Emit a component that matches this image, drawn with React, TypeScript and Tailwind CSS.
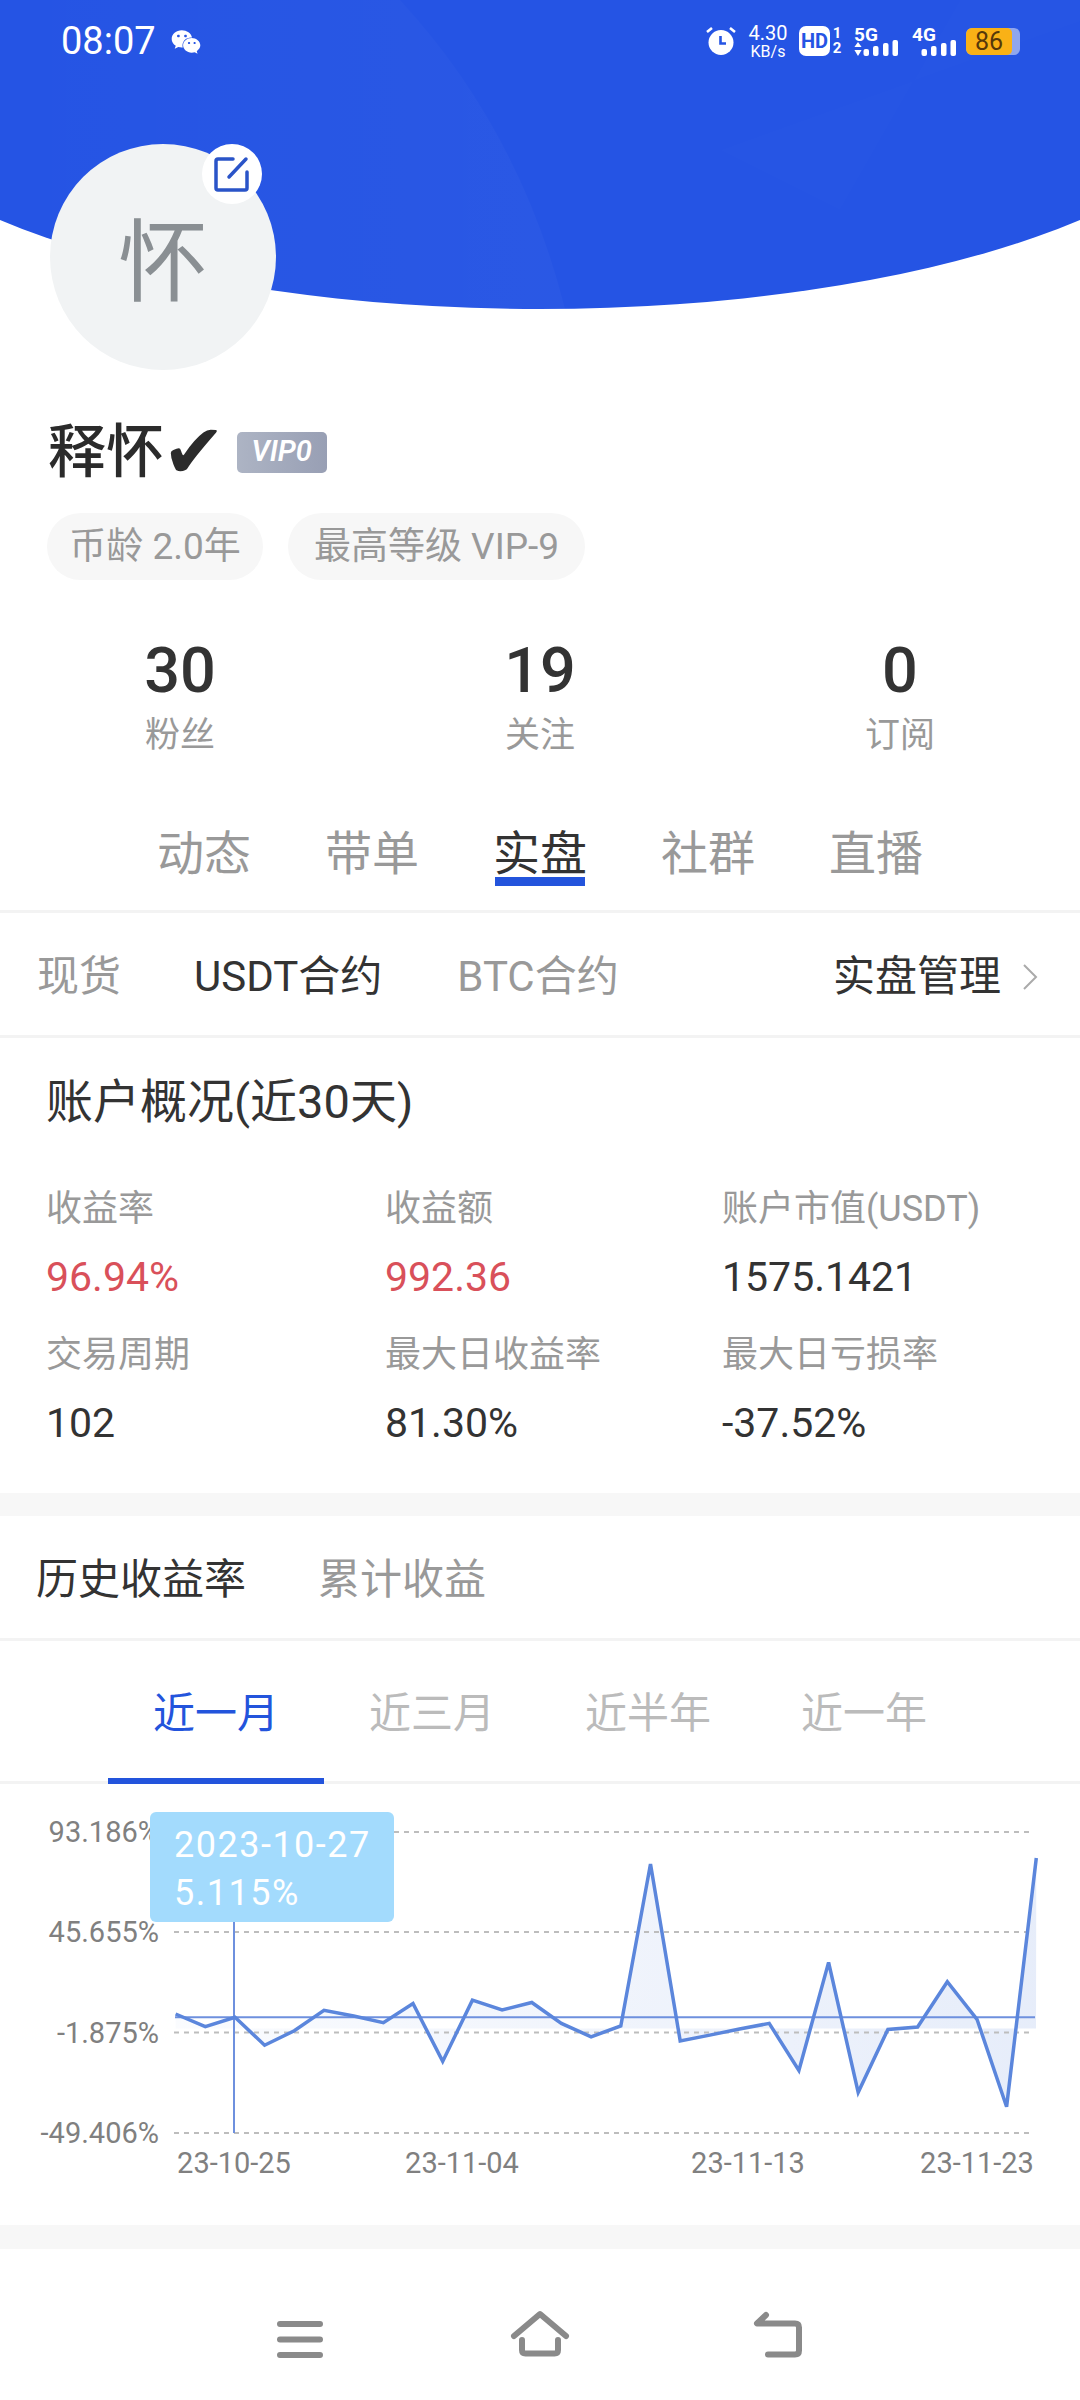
import { FaWeixin } from 'react-icons/fa';

const ys = [230, 242.7, 233.3, 261.2, 246.8, 226.3, 232, 238.7, 219.5, 277.4, 216.2, 226, 218.5, 239.4, 252.8, 242, 80, 256.9, 251.1, 245, 239.4, 286.4, 178.4, 308.3, 245.4, 243, 197.7, 235.3, 322.7, 74];
const points = ys.map((y, i) => `${(175.6 + i * 29.68).toFixed(1)},${y}`).join(' ');
const grid = [
  { y: 48, label: '93.186%' },
  { y: 148, label: '45.655%' },
  { y: 248.5, label: '-1.875%' },
  { y: 349, label: '-49.406%' },
];
const dates = [
  { x: 234, label: '23-10-25' },
  { x: 462, label: '23-11-04' },
  { x: 748, label: '23-11-13' },
  { x: 977, label: '23-11-23' },
];
const overview = [
  { label: '收益率', value: '96.94%', red: true },
  { label: '收益额', value: '992.36', red: true },
  { label: '账户市值(USDT)', value: '1575.1421' },
  { label: '交易周期', value: '102' },
  { label: '最大日收益率', value: '81.30%' },
  { label: '最大日亏损率', value: '-37.52%' },
];

function Signal({ name, arrows }: { name: string; arrows?: boolean }) {
  return (
    <svg className="-mt-[6px]" width="44" height="36" viewBox="0 -6 44 36" fill="#fff">
      <text x="0" y="14.5" fontSize="19" fontWeight="700" fontFamily="Roboto, sans-serif">{name}</text>
      {arrows && <path d="M4 16l3.600 5H.4zM.4 24h7.200L4 30z" />}
      <rect x="9.500" y="23" width="5.500" height="7" rx="2" />
      <rect x="19" y="20" width="5.500" height="10" rx="2" />
      <rect x="29" y="17" width="5.500" height="13" rx="2" />
      <rect x="38.500" y="14" width="5.500" height="16" rx="2" />
    </svg>
  );
}

function StatusBar() {
  return (
    <div className="flex h-[82px] items-center text-white">
      <span className="ml-[61px] text-[38px] leading-none">08:07</span>
      <FaWeixin className="ml-[15px] mt-[2px] h-[30px] w-[30px]" />
      <div className="ml-auto mr-[60px] flex items-center">
        <svg width="30" height="30" viewBox="0 0 30 30">
          <circle cx="15" cy="16.500" r="12.500" fill="#fff" />
          <path d="M14.500 10v7.500H20" fill="none" stroke="#2554e4" strokeWidth="2.600" />
          <path d="M1 6l5-4M29 6l-5-4" stroke="#fff" strokeWidth="2.600" />
        </svg>
        <div className="ml-[12px] flex w-[40px] flex-col items-center leading-none">
          <span className="text-[20px]">4.30</span>
          <span className="mt-[1px] text-[16px]">KB/s</span>
        </div>
        <div className="ml-[11px] flex h-[30px] w-[31px] items-center justify-center rounded-[7px] bg-white text-[20px] font-bold text-[#2554e4]">HD</div>
        <div className="ml-[2px] flex w-[10px] flex-col items-center text-[15px] font-bold leading-[15px]">
          <span>1</span>
          <span>2</span>
        </div>
        <div className="ml-[12px] flex">
          <Signal name="5G" arrows />
        </div>
        <div className="ml-[14px] flex">
          <Signal name="4G" />
        </div>
        <div className="ml-[10px] flex h-[27px] w-[54px] overflow-hidden rounded-[6px] bg-[#8fa6ee]">
          <div className="flex h-full w-[46px] items-center justify-center rounded-[5px] bg-[#f9b116] text-[25px] leading-none text-[#55380a]">86</div>
        </div>
      </div>
    </div>
  );
}

function Chart() {
  return (
    <div className="relative h-[441px]">
      <svg width="1080" height="441" viewBox="0 0 1080 441">
        <defs>
          <linearGradient id="area" x1="0" y1="0" x2="1" y2="0">
            <stop offset="0" stopColor="#5b86dc" stopOpacity="0.03" />
            <stop offset="1" stopColor="#5b86dc" stopOpacity="0.15" />
          </linearGradient>
        </defs>
        <polygon points={`175.6,244.5 ${points} 1036,244.5`} fill="url(#area)" />
        {grid.map((g) => (
          <line key={g.y} x1="174" x2="1031" y1={g.y} y2={g.y} stroke="#bdbdbd" strokeWidth="2" strokeDasharray="5 5" />
        ))}
        <line x1="175" x2="1035" y1="233.3" y2="233.3" stroke="#6e90de" strokeWidth="2" />
        <line x1="234" x2="234" y1="130" y2="349" stroke="#6e90de" strokeWidth="2" />
        <polyline points={points} fill="none" stroke="#5b86dc" strokeWidth="3.500" />
        <g fontFamily="Roboto, sans-serif" fontSize="29" fill="#808080">
          {grid.map((g) => (
            <text key={g.label} x="159" y={g.y + 10} textAnchor="end">{g.label}</text>
          ))}
          {dates.map((d) => (
            <text key={d.label} x={d.x} y="389" textAnchor="middle">{d.label}</text>
          ))}
        </g>
      </svg>
      <div className="absolute left-[150px] top-[28px] flex h-[110px] w-[244px] flex-col justify-center gap-[12px] rounded-[6px] bg-[#a3dbfd] pl-[24px] pt-[3px] text-[36px] leading-[36px] tracking-[1.5px] text-white">
        <span>2023-10-27</span>
        <span>5.115%</span>
      </div>
    </div>
  );
}

function NavBar() {
  return (
    <div className="mx-[180px] grid grid-cols-3 justify-items-center pt-[61px] text-[#8a8a8a]">
      <svg width="60" height="60" viewBox="0 0 60 60" fill="none" stroke="currentColor" strokeWidth="6" strokeLinecap="round">
        <path d="M10 14h40M10 29.500h40M10 45h40" />
      </svg>
      <svg width="60" height="60" viewBox="0 0 60 60" fill="none" stroke="currentColor" strokeWidth="6" strokeLinecap="round" strokeLinejoin="round">
        <path d="M4 26L30 4l26 22" />
        <path d="M12 30v10q0 3.500 3.500 3.500h29q3.500 0 3.500-3.500V30" />
      </svg>
      <svg width="60" height="60" viewBox="0 0 60 60" fill="none" stroke="currentColor" strokeWidth="6" strokeLinecap="round" strokeLinejoin="round">
        <path d="M16 5l-9 8.500h38q4 0 4 4v23q0 4-4 4H18" />
      </svg>
    </div>
  );
}

export default function App() {
  return (
    <div className="relative h-[2400px] w-[1080px] overflow-hidden bg-white text-[#333] [font-family:Roboto,'Noto_Sans_CJK_SC',sans-serif]">
      {/* blue header, the wide ellipse gives the shallow curve */}
      <div className="absolute -left-[160px] top-0 h-[309px] w-[1400px] overflow-hidden rounded-bl-[700px_245px] rounded-br-[700px_245px] bg-[#2554e4]">
        <svg width="1400" height="309" viewBox="0 0 1400 309">
          <defs>
            <linearGradient id="shine" x1="0" y1="0" x2="1" y2="0">
              <stop offset="0" stopColor="#fff" stopOpacity="0" />
              <stop offset="1" stopColor="#fff" stopOpacity="0.025" />
            </linearGradient>
          </defs>
          <path d="M160 0H560Q680 130 725 309H160z" fill="url(#shine)" />
          <path d="M880 150L1000 210L1120 0H1300z" fill="#fff" fillOpacity="0.008" />
        </svg>
      </div>

      <div className="relative flex flex-col">
        <StatusBar />

        <div className="relative ml-[50px] mt-[62px] flex h-[226px] w-[226px] items-center justify-center rounded-full bg-[#f1f3f4] pt-[14px] text-[90px] leading-none text-[#8a8f93]">
          怀
          <div className="absolute right-[14px] top-[0px] flex h-[60px] w-[60px] items-center justify-center rounded-full bg-white">
            <svg width="38" height="38" viewBox="0 0 38 38" fill="none" stroke="#2a54c8" strokeWidth="3.500" strokeLinecap="round" strokeLinejoin="round">
              <path d="M20 4H5q-2 0-2 2v27q0 2 2 2h27q2 0 2-2V17" />
              <path d="M16 22L33 4" />
            </svg>
          </div>
        </div>

        <div className="ml-[48px] mt-[42px] flex h-[80px] items-center">
          <span className="text-[58px] font-medium leading-none text-[#2b2b2b]">释怀</span>
          <span className="-ml-[2px] text-[76px] leading-none text-[#2b2b2b] [font-family:'DejaVu_Sans',sans-serif]">✔</span>
          <span className="ml-[11px] flex h-[41px] w-[90px] items-center justify-center rounded-[5px] bg-gradient-to-r from-[#adb4c4] to-[#989fb4] text-[29px] font-semibold italic text-white">VIP0</span>
        </div>

        <div className="ml-[47px] mt-[21px] flex h-[67px] gap-[25px] text-[37px] text-[#999]">
          <span className="flex w-[216px] items-center justify-center rounded-full bg-[#f7f7f7]">币龄 2.0年</span>
          <span className="flex w-[297px] items-center justify-center rounded-full bg-[#f7f7f7]">最高等级 VIP-9</span>
        </div>

        <div className="mt-[50px] grid grid-cols-3 text-center">
          {[['30', '粉丝'], ['19', '关注'], ['0', '订阅']].map(([n, l]) => (
            <div key={l} className="flex flex-col items-center">
              <span className="mt-[1px] flex h-[78px] items-center text-[63px] font-medium leading-none">{n}</span>
              <span className="-mt-[1px] flex h-[54px] items-center text-[35px] leading-none text-[#999]">{l}</span>
            </div>
          ))}
        </div>

        <div className="mt-[61px] grid grid-cols-5 border-b-[3px] border-[#f3f3f3] px-[120px] pb-[27px]">
          {['动态', '带单', '实盘', '社群', '直播'].map((t) => (
            <div key={t} className={`relative flex h-[60px] items-center justify-center text-[47px] leading-none ${t === '实盘' ? 'text-[#333]' : 'text-[#999]'}`}>
              {t}
              {t === '实盘' && <div className="absolute left-[39px] top-[54px] h-[9px] w-[90px] bg-[#2354dc]" />}
            </div>
          ))}
        </div>

        <div className="flex h-[125px] items-center border-b-[3px] border-[#f3f3f3] pt-[5px] text-[42px] leading-none">
          <span className="ml-[37px] text-[#999]">现货</span>
          <span className="ml-[73px] text-[#333]">USDT合约</span>
          <span className="ml-[75px] text-[#999]">BTC合约</span>
          <span className="ml-auto text-[#333]">实盘管理</span>
          <svg className="ml-[21px] mr-[42px]" width="16" height="28" viewBox="0 0 16 28" fill="none" stroke="#aaa" strokeWidth="2">
            <path d="M2 2l12 12L2 26" />
          </svg>
        </div>

        <div className="h-[455px] pl-[46px] pt-[36px]">
          <div className="flex h-[54px] items-center text-[47px] leading-none">账户概况(近30天)</div>
          <div className="mt-[59px] grid grid-cols-[339px_337px_1fr]">
            {overview.map((o) => (
              <div key={o.label} className="flex h-[146px] flex-col">
                <span className="flex h-[44px] items-center text-[36px] leading-none text-[#999]">{o.label}</span>
                <span className={`mt-[24px] flex h-[44px] items-center text-[41px] leading-none ${o.red ? 'text-[#d9505a]' : 'text-[#333]'}`}>{o.value}</span>
              </div>
            ))}
          </div>
        </div>

        <div className="h-[23px] bg-[#f7f7f7]" />

        <div className="flex h-[125px] items-center border-b-[3px] border-[#f3f3f3] pt-[5px] text-[42px] leading-none">
          <span className="ml-[36px] text-[#333]">历史收益率</span>
          <span className="ml-[72px] text-[#999]">累计收益</span>
        </div>

        <div className="flex h-[143px] border-b-[3px] border-[#f3f3f3] pl-[108px] text-[42px] leading-none">
          {['近一月', '近三月', '近半年', '近一年'].map((t, i) => (
            <div key={t} className={`relative flex w-[216px] items-center justify-center pt-[6px] ${i === 0 ? 'text-[#2354dc]' : 'text-[#bbb]'}`}>
              {t}
              {i === 0 && <div className="absolute bottom-[-3px] left-0 h-[6px] w-full bg-[#2354dc]" />}
            </div>
          ))}
        </div>

        <Chart />

        <div className="h-[24px] bg-[#f7f7f7]" />

        <NavBar />
      </div>
    </div>
  );
}
